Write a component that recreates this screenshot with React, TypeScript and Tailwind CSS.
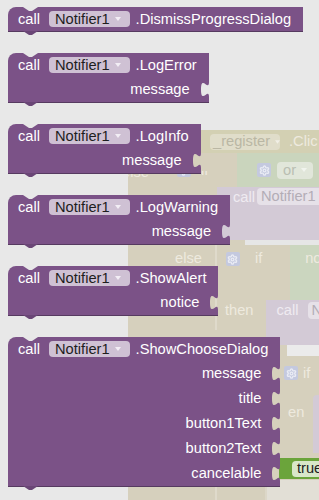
import { Settings } from "lucide-react";

const blocks = [
  { id: 1, method: ".DismissProgressDialog", inputs: [] as string[] },
  { id: 2, method: ".LogError", inputs: ["message"] },
  { id: 3, method: ".LogInfo", inputs: ["message"] },
  { id: 4, method: ".LogWarning", inputs: ["message"] },
  { id: 5, method: ".ShowAlert", inputs: ["notice"] },
  { id: 6, method: ".ShowChooseDialog", inputs: ["message", "title", "button1Text", "button2Text", "cancelable"] },
];

function Tab() {
  // puzzle tab cut out of the right edge
  return (
    <svg width="9" height="25" viewBox="0 0 9 25" className="block shrink-0">
      <path d="M0,0 H9 V5 C9,15 1,-3 1,12.5 S9,10 9,20 V25 H0 Z" fill="#7b5287" />
    </svg>
  );
}

function Arrow({ color }: { color: string }) {
  return (
    <svg width="6" height="4" viewBox="0 0 6 4" className="ml-[5px] block">
      <path d="M0,0 H6 L3,4 Z" fill={color} />
    </svg>
  );
}

function Gear({ className = "" }: { className?: string }) {
  return (
    <div className={`flex h-[14px] w-[14px] shrink-0 items-center justify-center rounded-[2px] bg-[#c4c9df] ${className}`}>
      <Settings size={11} strokeWidth={3} color="#e9ebf4" />
    </div>
  );
}

function CallBlock({ method, inputs }: { method: string; inputs: string[] }) {
  return (
    <div className="relative inline-flex flex-col border-b border-[#563a60] text-white">
      <div className="flex h-[24px] items-center rounded-tl-[8px] bg-[#7b5287] pl-[10px] pr-[12px]">
        <span>call</span>
        <span className="ml-[9px] flex h-[16px] items-center rounded-[4px] bg-[#cfc1d4] pl-[6px] pr-[9px] text-[#1e1e1e]">
          Notifier1
          <Arrow color="#f3eef5" />
        </span>
        <span className="ml-[6px]">{method}</span>
      </div>
      {inputs.map((label) => (
        <div key={label} className="flex h-[25px]">
          <div className="flex flex-1 items-center justify-end bg-[#7b5287] pr-[10px]">{label}</div>
          <Tab />
        </div>
      ))}
      <svg width="15" height="4" viewBox="0 0 15 4" className="absolute left-[15px] top-0">
        <path d="M0,0 L6,4 L9,4 L15,0 Z" fill="#e8e8e8" />
      </svg>
      <svg width="15" height="5" viewBox="0 0 15 5" className="absolute left-[15px] top-full">
        <path d="M0,0 L6,4 L9,4 L15,0 Z" fill="#6a4676" />
      </svg>
    </div>
  );
}

// faded blocks lying on the workspace behind the drawer
function Backdrop() {
  const ghost = "shrink-0 text-[#eeeadf]";
  return (
    <div className="absolute inset-0">
      {/* if / else body */}
      <div className="absolute bottom-0 left-[128px] right-0 top-[153px] bg-[#d6d0bd]" />

      {/* when ..._register.Click header */}
      <div className="absolute left-[200px] right-0 top-[130px] flex h-[23px] items-center bg-[#d3d0b3] pl-[10px]">
        <div className="flex h-[16px] w-[70px] shrink-0 items-center rounded-[4px] bg-[#e0ddca] pl-[3px] text-[#bab7a4]">
          _register
          <Arrow color="#f1efe6" />
        </div>
        <span className={`${ghost} ml-[9px]`}>.Clic</span>
      </div>

      {/* or block */}
      <div className="absolute left-[237px] right-0 top-[153px] flex h-[34px] items-center bg-[#cad5bd] pl-[20px]">
        <Gear />
        <div className="ml-[6px] flex h-[17px] w-[36px] shrink-0 items-center rounded-[4px] bg-[#e1e6da] pl-[6px] text-[#b9beb2]">
          or
          <Arrow color="#f1f4ee" />
        </div>
      </div>

      {/* else if, half hidden under LogInfo */}
      <div className="absolute left-[128px] top-[171px] flex h-[16px] w-[109px] items-start overflow-hidden">
        <span className={`${ghost} -ml-[6px] -mt-[6px]`}>else</span>
        <Gear className="-mt-[8px] ml-[28px]" />
        <span className={`${ghost} -mt-[8px] ml-[10px]`}>if</span>
      </div>

      {/* call Notifier1 ... */}
      <div className="absolute left-[217px] right-0 top-[187px] flex h-[53px] items-start bg-[#d3cad6] pl-[16px] pt-[1px]">
        <span className="mt-[2px] shrink-0 text-[#efebf1]">call</span>
        <div className="ml-[2px] flex h-[17px] w-[70px] shrink-0 items-center rounded-[4px] bg-[#e6e1e8] pl-[4px] text-[#b3adb6]">
          Notifier1
        </div>
      </div>
      <div className="absolute left-[245px] right-0 top-[240px] h-[5px] bg-[#e6e6e6]" />

      {/* else if ... */}
      <div className="absolute left-[175px] right-0 top-[245px] flex h-[55px] items-start overflow-hidden">
        <span className={`${ghost} mt-[6px]`}>else</span>
        <div className="ml-[13px] h-[55px] w-[2px] shrink-0 bg-[#dfdacb]" />
        <Gear className="ml-[9px] mt-[7px]" />
        <span className={`${ghost} ml-[15px] mt-[6px]`}>if</span>
        <div className="ml-[28px] h-full flex-1 bg-[#cbd6bf] pl-[15px] pt-[6px]">
          <span className="text-[#eeeadf]">no</span>
        </div>
      </div>

      {/* then call N... */}
      <div className="absolute left-[215px] right-0 top-[300px] flex h-[45px] items-start overflow-hidden">
        <div className="h-[30px] w-[2px] shrink-0 bg-[#dfdacb]" />
        <span className={`${ghost} ml-[8px] mt-[3px]`}>then</span>
        <div className="ml-[12px] flex h-full flex-1 items-start bg-[#d3cad6] pl-[11px] pt-[2px]">
          <span className="mt-[1px] shrink-0 text-[#efebf1]">call</span>
          <div className="ml-[9px] h-[17px] w-[20px] shrink-0 rounded-[4px] bg-[#e6e1e8] pl-[4px] leading-[17px] text-[#b3adb6]">
            N
          </div>
        </div>
      </div>

      {/* right edge: nested if, then, true */}
      <div className="absolute bottom-0 left-[279px] right-0 top-[345px] flex flex-col">
        <div className="ml-[8px] h-[11px] bg-[#ebebeb]" />
        <div className="flex h-[34px] items-center">
          <Gear className="ml-[5px]" />
          <span className={`${ghost} ml-[5px]`}>if</span>
        </div>
        <div className="flex h-[63px] items-start">
          <span className={`${ghost} ml-[9px] mt-[15px]`}>en</span>
          <div className="ml-auto mt-[5px] h-[58px] w-[6px] rounded-tl-[4px] bg-[#d3cad6]" />
        </div>
        <div className="mt-[5px] flex h-[21px] items-center bg-[#6ba43b] pl-[13px]">
          <div className="flex h-[16px] items-center rounded-[4px] bg-[#d8e7c9] pl-[5px] pr-[10px] text-[#1e1e1e]">
            true
          </div>
        </div>
      </div>

      {/* bottom edges of nested blocks */}
      <div className="absolute bottom-0 left-[215px] right-0 flex h-[20px]">
        <div className="w-[2px] bg-[#dfdacb]" />
        <div className="ml-[48px] flex-1 border-l-2 border-[#dcd7c8] bg-[#e2dfd6]" />
      </div>
    </div>
  );
}

export default function App() {
  return (
    <div className="relative h-[500px] w-[319px] overflow-hidden bg-[#e8e8e8] font-['Liberation_Sans',Arial,sans-serif] text-[14.67px] leading-none">
      <Backdrop />
      <div className="relative flex flex-col items-start gap-[21px] pl-[8px] pt-[7px]">
        {blocks.map((b) => (
          <CallBlock key={b.id} method={b.method} inputs={b.inputs} />
        ))}
      </div>
    </div>
  );
}
